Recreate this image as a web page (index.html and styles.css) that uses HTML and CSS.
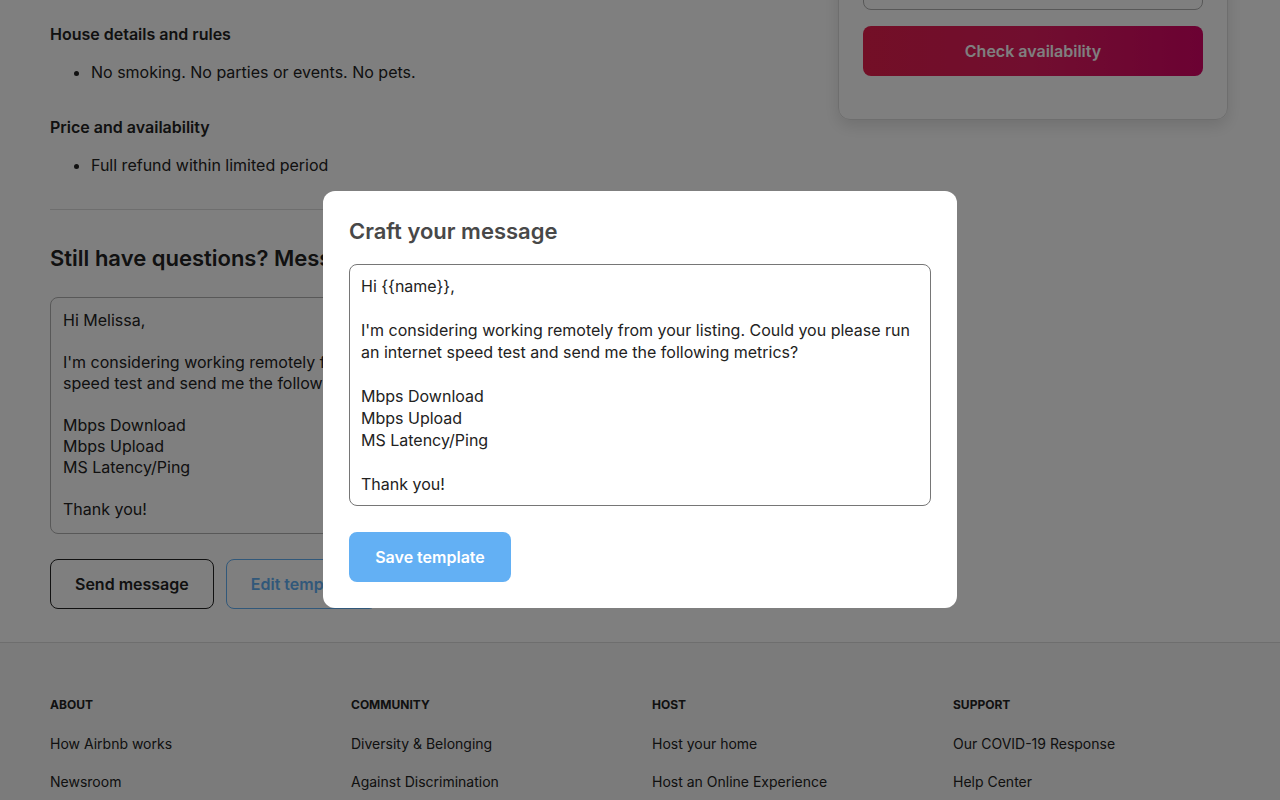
FILE: index.html
```html
<!DOCTYPE html>
<html lang="en">
<head>
  <meta charset="UTF-8">
  <meta name="viewport" content="width=device-width, initial-scale=1.0">
  <title>Listing - Message host</title>
  <link rel="stylesheet" href="styles.css">
</head>
<body>
  <div class="page">
    <main class="details">
      <h3 class="section-title">House details and rules</h3>
      <ul class="rules">
        <li>No smoking. No parties or events. No pets.</li>
      </ul>

      <h3 class="section-title spaced">Price and availability</h3>
      <ul class="rules">
        <li>Full refund within limited period</li>
      </ul>

      <hr class="divider">

      <h2 class="questions">Still have questions? Message the host</h2>
      <div class="message-box">Hi Melissa,

I'm considering working remotely from your listing. Could you please run an internet speed test and send me the following metrics?

Mbps Download
Mbps Upload
MS Latency/Ping

Thank you!</div>

      <div class="actions">
        <button class="btn btn-outline">Send message</button>
        <button class="btn btn-blue-outline">Edit template</button>
      </div>
    </main>

    <aside class="booking">
      <div class="booking-card">
        <div class="guests"></div>
        <button class="btn-check">Check availability</button>
      </div>
    </aside>
  </div>

  <footer class="footer">
    <div class="footer-grid">
      <div class="footer-col">
        <h4>About</h4>
        <a href="#">How Airbnb works</a>
        <a href="#">Newsroom</a>
      </div>
      <div class="footer-col">
        <h4>Community</h4>
        <a href="#">Diversity &amp; Belonging</a>
        <a href="#">Against Discrimination</a>
      </div>
      <div class="footer-col">
        <h4>Host</h4>
        <a href="#">Host your home</a>
        <a href="#">Host an Online Experience</a>
      </div>
      <div class="footer-col">
        <h4>Support</h4>
        <a href="#">Our COVID-19 Response</a>
        <a href="#">Help Center</a>
      </div>
    </div>
  </footer>

  <div class="overlay">
    <div class="modal">
      <h2 class="modal-title">Craft your message</h2>
      <div class="template-box">Hi {{name}},

I'm considering working remotely from your listing. Could you please run an internet speed test and send me the following metrics?

Mbps Download
Mbps Upload
MS Latency/Ping

Thank you!</div>
      <button class="btn-save">Save template</button>
    </div>
  </div>
</body>
</html>
```

FILE: styles.css
```css
body {
  font-family: Inter, "Noto Sans", sans-serif;
  color: #222;
  background-color: #fff;
  margin: 0;
  height: 800px;
  overflow: hidden;
}
.page {
  display: flex;
  gap: 88px;
  padding: 0 51px 0 50px;
}
.details {
  width: 700px;
  padding-top: 23px;
}
.section-title {
  font-size: 16px;
  font-weight: 600;
  line-height: 22px;
  margin: 0;
}
.section-title.spaced {
  margin-top: 33px;
}
.rules {
  margin: 16px 0 0;
  padding-left: 41px;
  font-size: 16px;
  line-height: 22px;
}
.divider {
  border: 0;
  border-top: 1px solid #ddd;
  margin: 33px 0 0;
}
.questions {
  font-size: 22px;
  font-weight: 600;
  line-height: 28px;
  margin: 34px 0 0;
  white-space: nowrap;
}
.message-box {
  margin-top: 25px;
  border: 1px solid #b0b0b0;
  border-radius: 8px;
  padding: 12px 12px 13px;
  font-size: 16px;
  line-height: 21px;
  white-space: pre-wrap;
}
.actions {
  display: flex;
  gap: 12px;
  margin-top: 25px;
}
.btn {
  font-family: inherit;
  font-size: 16px;
  font-weight: 600;
  height: 50px;
  padding: 0 24px;
  border-radius: 8px;
  background: #fff;
}
.btn-outline {
  border: 1px solid #222;
  color: #222;
}
.btn-blue-outline {
  border: 1px solid #63b0f4;
  color: #63b0f4;
}
.booking {
  width: 390px;
}
.booking-card {
  margin-top: -73px;
  border: 1px solid #ddd;
  border-radius: 12px;
  padding: 24px 24px 43px;
  box-shadow: 0 6px 16px rgba(0, 0, 0, 0.12);
}
.guests {
  height: 56px;
  border: 1px solid #b0b0b0;
  border-radius: 8px;
}
.btn-check {
  display: block;
  width: 100%;
  height: 50px;
  margin-top: 16px;
  border: 0;
  border-radius: 8px;
  background: linear-gradient(to right, #e61e4d 0%, #e31c5f 50%, #d70466 100%);
  color: #fff;
  font-family: inherit;
  font-size: 16px;
  font-weight: 600;
}
.footer {
  margin-top: 33px;
  border-top: 1px solid #ddd;
  background-color: #f7f7f7;
  padding: 53px 50px 40px;
}
.footer-grid {
  display: grid;
  grid-template-columns: repeat(4, 1fr);
  gap: 24px;
}
.footer-col h4 {
  font-size: 12px;
  font-weight: 700;
  text-transform: uppercase;
  line-height: 18px;
  margin: 0 0 20px;
}
.footer-col a {
  display: block;
  color: #222;
  text-decoration: none;
  font-size: 14px;
  line-height: 20px;
  margin-bottom: 18px;
}
.overlay {
  position: fixed;
  inset: 0;
  background: rgba(0, 0, 0, 0.5);
  display: flex;
  align-items: center;
  justify-content: center;
}
.modal {
  width: 634px;
  box-sizing: border-box;
  background: #fff;
  border-radius: 12px;
  padding: 23px 26px 26px;
  margin-bottom: 1px;
}
.modal-title {
  font-size: 22px;
  font-weight: 600;
  color: #484848;
  line-height: 34px;
  margin: 0 0 16px;
}
.template-box {
  border: 1px solid #767676;
  border-radius: 8px;
  padding: 10px 11px;
  font-size: 16px;
  line-height: 22px;
  white-space: pre-wrap;
}
.btn-save {
  margin-top: 26px;
  height: 50px;
  width: 162px;
  border: 0;
  border-radius: 8px;
  background: #63b0f4;
  color: #fff;
  font-family: inherit;
  font-size: 16px;
  font-weight: 600;
}
```
